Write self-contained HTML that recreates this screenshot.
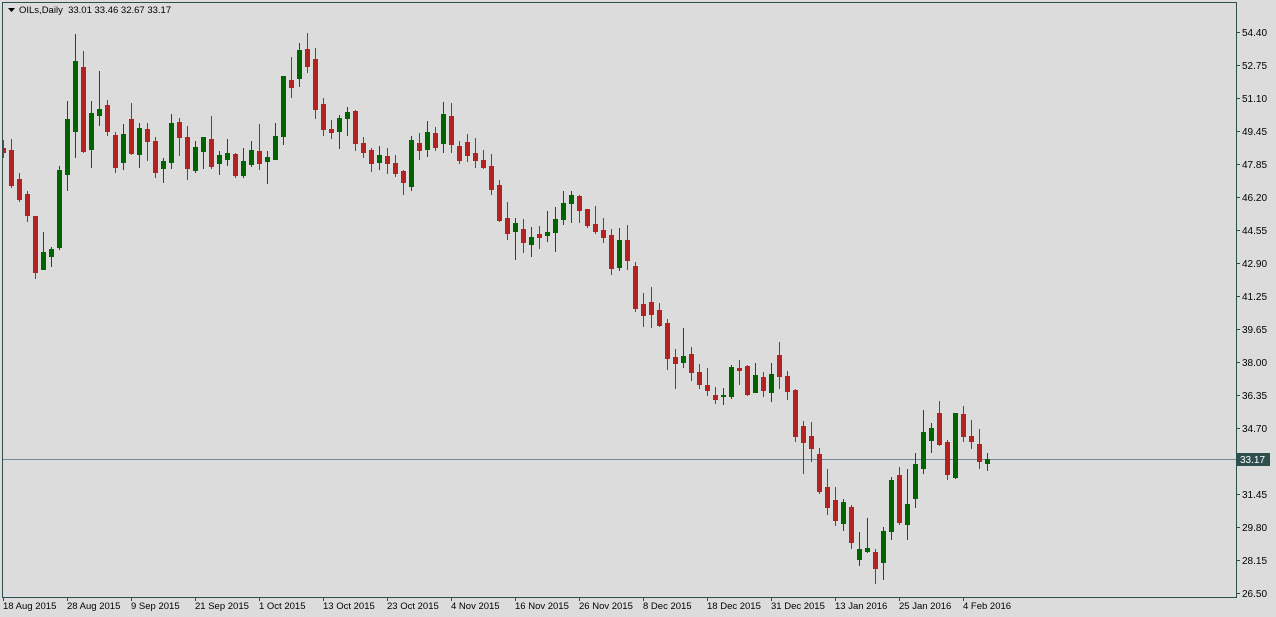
<!DOCTYPE html>
<html><head><meta charset="utf-8"><style>
html,body{margin:0;padding:0;background:#dcdcdc;}
svg{display:block;font-family:"Liberation Sans",Tahoma,sans-serif;}
</style></head><body>
<svg id="c" width="1276" height="617" xmlns="http://www.w3.org/2000/svg" shape-rendering="crispEdges">
<rect width="1276" height="617" fill="#dcdcdc"/>
<rect x="2.5" y="2.5" width="1234" height="595" fill="none" stroke="#2f4f4f" stroke-width="1"/>
<line x1="3" y1="459.5" x2="1236" y2="459.5" stroke="#778899" stroke-width="1"/>
<g id="k"></g>
<g id="ax" font-size="10" fill="#000"></g>
<path d="M8 8 L15 8 L11.5 12 Z" fill="#000" shape-rendering="auto"/>
<text x="19" y="13" font-size="9.5" fill="#000" xml:space="preserve">OILs,Daily  33.01 33.46 32.67 33.17</text>
<rect x="1237" y="453" width="33" height="13" fill="#2f4f4f"/>
<text x="1240" y="463" font-size="10" fill="#fff">33.17</text>
</svg>
<script>
var D=[
['r',140,148,152,157],['r',139,150,185,187],['r',173,179,199,201],['r',191,194,215,221],['r',216,216,272,278],
['g',232,252,269,269],['g',247,249,256,266],['g',166,170,247,249],['g',101,119,174,190],['g',34,61,131,157],
['r',51,67,151,152],['g',101,113,149,167],['g',71,109,115,125],['r',100,105,131,135],['r',132,135,167,172],
['g',124,134,162,169],['r',103,119,153,154],['g',123,128,154,167],['r',123,129,141,160],['r',137,141,172,177],
['g',158,161,168,182],['g',114,123,162,168],['r',118,122,137,155],['r',126,137,168,179],['g',141,147,170,172],
['g',137,137,151,168],['r',116,139,166,168],['g',151,155,163,174],['g',139,153,159,165],['r',153,154,175,177],
['g',148,161,175,177],['g',141,150,164,166],['r',124,151,163,169],['g',151,157,161,183],['g',123,136,159,159],
['g',76,76,136,144],['r',57,80,87,97],['g',43,50,78,86],['r',33,49,66,72],['r',48,59,109,118],
['r',98,104,129,135],['r',120,129,132,138],['g',115,118,131,148],['g',107,112,118,135],['r',110,111,143,150],
['r',137,143,152,157],['r',148,150,163,171],['g',146,155,162,169],['r',148,156,163,173],['r',155,163,173,176],
['r',170,171,182,194],['g',136,140,186,190],['r',133,143,150,159],['g',121,132,149,156],['r',127,133,147,150],
['g',102,114,143,152],['r',103,116,144,152],['r',141,146,160,163],['r',134,142,155,161],['r',138,153,160,167],
['r',150,160,167,168],['r',154,166,189,194],['r',180,185,220,221],['r',202,218,233,239],['g',218,223,231,259],
['r',219,229,242,252],['g',227,237,244,256],['r',226,234,237,248],['g',211,232,235,241],['g',207,219,232,251],
['g',191,203,219,224],['g',191,195,203,222],['r',195,196,210,222],['r',209,209,225,227],['r',206,224,231,233],
['r',218,230,237,242],['r',229,235,268,274],['g',228,240,267,270],['r',225,240,260,269],['r',262,266,308,311],
['r',293,304,315,326],['r',287,302,314,327],['r',303,310,325,326],['r',319,323,358,369],['r',349,357,363,388],
['g',328,356,362,367],['r',347,354,372,380],['r',364,372,384,388],['r',368,385,390,395],['r',387,395,399,403],
['g',388,395,396,404],['g',365,367,396,398],['r',360,368,370,384],['r',365,366,394,395],['g',363,375,392,392],
['r',372,377,390,396],['g',363,374,392,401],['r',342,355,376,388],['r',371,376,391,399],['r',389,390,436,441],
['r',421,426,442,473],['r',422,436,448,461],['r',448,454,491,493],['r',469,487,507,514],['r',487,500,520,525],
['g',499,502,523,530],['r',505,507,542,548],['g',532,549,559,565],['g',518,548,551,552],['r',549,552,568,583],
['g',527,531,562,579],['g',477,480,531,539],['r',467,475,522,524],['g',469,504,524,539],['g',453,464,498,507],
['g',410,432,468,473],['g',423,428,440,452],['r',401,413,444,445],['r',440,442,474,479],['g',413,413,477,478],
['r',406,414,436,441],['r',420,436,441,448],['r',429,444,461,468],['g',453,459,463,470]];
var k=document.getElementById('k'),s='';
D.forEach(function(d,i){var cx=3+8*i,c=d[0]=='r'?'#b22222':'#006400';
var bx=Math.max(cx-2,3),bw=cx+3-bx;
s+='<rect x="'+cx+'" y="'+d[1]+'" width="1" height="'+(d[4]-d[1]+1)+'" fill="'+c+'"/>';
s+='<rect x="'+bx+'" y="'+d[2]+'" width="'+bw+'" height="'+Math.max(1,d[3]-d[2]+1)+'" fill="'+c+'"/>';});
k.innerHTML=s;
var ax=document.getElementById('ax'),a='';
var P=[['54.40',32],['52.75',65],['51.10',98],['49.45',131],['47.85',164],['46.20',197],['44.55',230],['42.90',263],['41.25',296],['39.65',329],['38.00',362],['36.35',395],['34.70',428],['31.45',494],['29.80',527],['28.15',560],['26.50',593]];
P.forEach(function(p){a+='<rect x="1237" y="'+p[1]+'" width="3" height="1" fill="#2f4f4f"/><text x="1242" y="'+(p[1]+4)+'">'+p[0]+'</text>';});
var T=['18 Aug 2015','28 Aug 2015','9 Sep 2015','21 Sep 2015','1 Oct 2015','13 Oct 2015','23 Oct 2015','4 Nov 2015','16 Nov 2015','26 Nov 2015','8 Dec 2015','18 Dec 2015','31 Dec 2015','13 Jan 2016','25 Jan 2016','4 Feb 2016'];
T.forEach(function(t,i){var x=3+64*i;a+='<rect x="'+x+'" y="598" width="1" height="3" fill="#2f4f4f"/><text x="'+x+'" y="609" font-size="9.5">'+t+'</text>';});
ax.innerHTML=a;
</script>
</body></html>
